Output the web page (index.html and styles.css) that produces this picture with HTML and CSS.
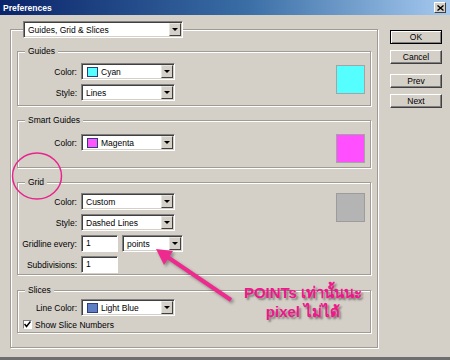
FILE: index.html
```html
<!DOCTYPE html>
<html lang="th">
<head>
    <meta charset="UTF-8">
    <meta name="viewport" content="width=device-width, initial-scale=1.0">
    <title>Preferences</title>

    <!-- Styles -->
    <link rel="stylesheet" href="styles.css">
</head>
<body>
    <!-- Title bar -->
    <div class="titlebar">
        <span class="title">Preferences</span>
        <span class="close-btn">
            <svg width="7" height="6" viewBox="0 0 7 6"><path d="M0.5 0.5 L6.5 5.5 M6.5 0.5 L0.5 5.5" stroke="#000" stroke-width="1.4"/></svg>
        </span>
    </div>

    <!-- Dialog content -->
    <div class="content">
        <div class="outer">
            <div class="select page-select">
                <span class="val">Guides, Grid &amp; Slices</span>
                <span class="arrow"></span>
            </div>

            <!-- Guides -->
            <div class="group guides">
                <span class="legend">Guides</span>
                <div class="fields">
                    <div class="row">
                        <span class="lbl">Color:</span>
                        <div class="select">
                            <span class="chip chip-cyan"></span>
                            <span class="val">Cyan</span>
                            <span class="arrow"></span>
                        </div>
                    </div>
                    <div class="row">
                        <span class="lbl">Style:</span>
                        <div class="select">
                            <span class="val">Lines</span>
                            <span class="arrow"></span>
                        </div>
                    </div>
                </div>
                <div class="swatch swatch-cyan"></div>
            </div>

            <!-- Smart Guides -->
            <div class="group smart">
                <span class="legend">Smart Guides</span>
                <div class="fields">
                    <div class="row">
                        <span class="lbl">Color:</span>
                        <div class="select">
                            <span class="chip chip-magenta"></span>
                            <span class="val">Magenta</span>
                            <span class="arrow"></span>
                        </div>
                    </div>
                </div>
                <div class="swatch swatch-magenta"></div>
            </div>

            <!-- Grid -->
            <div class="group grid">
                <span class="legend">Grid</span>
                <div class="fields">
                    <div class="row">
                        <span class="lbl">Color:</span>
                        <div class="select">
                            <span class="val">Custom</span>
                            <span class="arrow"></span>
                        </div>
                    </div>
                    <div class="row">
                        <span class="lbl">Style:</span>
                        <div class="select">
                            <span class="val">Dashed Lines</span>
                            <span class="arrow"></span>
                        </div>
                    </div>
                    <div class="row">
                        <span class="lbl">Gridline every:</span>
                        <div class="input">1</div>
                        <div class="select unit-select">
                            <span class="val">points</span>
                            <span class="arrow"></span>
                        </div>
                    </div>
                    <div class="row">
                        <span class="lbl">Subdivisions:</span>
                        <div class="input">1</div>
                    </div>
                </div>
                <div class="swatch swatch-gray"></div>
            </div>

            <!-- Slices -->
            <div class="group slices">
                <span class="legend">Slices</span>
                <div class="fields">
                    <div class="row">
                        <span class="lbl">Line Color:</span>
                        <div class="select">
                            <span class="chip chip-blue"></span>
                            <span class="val">Light Blue</span>
                            <span class="arrow"></span>
                        </div>
                    </div>
                    <div class="check-row">
                        <span class="checkbox">
                            <svg width="7" height="7" viewBox="0 0 7 7"><path d="M0.5 3 L2.5 5.5 L6.5 0.5" fill="none" stroke="#000" stroke-width="1.5"/></svg>
                        </span>
                        <span>Show Slice Numbers</span>
                    </div>
                </div>
            </div>
        </div>

        <!-- Buttons -->
        <div class="buttons">
            <div class="btn btn-default">OK</div>
            <div class="btn btn-cancel">Cancel</div>
            <div class="btn btn-prev">Prev</div>
            <div class="btn btn-next">Next</div>
        </div>
    </div>

    <div class="taskbar"></div>

    <!-- Annotation -->
    <svg class="marks" width="450" height="360" viewBox="0 0 450 360">
        <ellipse cx="37" cy="176" rx="24.5" ry="23" fill="none" stroke="#e8258c" stroke-width="1.5"/>
        <g class="arrow-mark">
            <line x1="231" y1="300" x2="166" y2="256" stroke="#ee2a8f" stroke-width="4"/>
            <polygon points="156,249 173,251 164,265" fill="#ee2a8f"/>
        </g>
    </svg>
    <div class="note">POINTs เท่านั้นนะ<br>pixel ไม่ได้</div>
</body>
</html>
```

FILE: styles.css
```css
/* Base Reset */
* {
    margin: 0;
    padding: 0;
    box-sizing: border-box;
}

body {
    position: relative;
    width: 450px;
    height: 360px;
    overflow: hidden;
    background-color: #d4d0c8;
    font-family: "Liberation Sans", Arial, sans-serif;
    font-size: 8.5px;
    color: #000;
}

/* Title Bar */
.titlebar {
    height: 15px;
    display: flex;
    align-items: center;
    justify-content: space-between;
    padding: 0 4px 0 3px;
    background: linear-gradient(to right, #0a246a, #3a6ea5 55%, #a6caf0);
}

.title {
    color: #fff;
    font-weight: bold;
}

.close-btn {
    width: 12px;
    height: 11px;
    display: flex;
    align-items: center;
    justify-content: center;
    background-color: #d4d0c8;
    border: 1px solid;
    border-color: #fff #404040 #404040 #fff;
}

/* Content */
.content {
    display: flex;
    height: 342px;
    padding: 14px 0 0 10px;
}

.outer {
    width: 368px;
    height: 319px;
    border: 1px solid #a09c94;
    box-shadow: 1px 1px 0 #fff, inset 1px 1px 0 #fff;
}

.taskbar {
    height: 3px;
    background-color: #6e6e6e;
}

/* Group Boxes */
.group {
    position: relative;
    display: flex;
    justify-content: space-between;
    width: 354px;
    margin-left: 6px;
    border: 1px solid #a09c94;
    box-shadow: 1px 1px 0 #fff, inset 1px 1px 0 #fff;
}

.legend {
    position: absolute;
    top: -6px;
    left: 7px;
    padding: 0 3px;
    line-height: 11px;
    background-color: #d4d0c8;
}

.guides {
    margin-top: 13px;
    padding: 11px 5px 4px 0;
}

.smart {
    margin-top: 14px;
    padding: 13px 5px 4px 0;
}

.grid {
    margin-top: 14px;
    padding: 10px 5px 1px 0;
}

.slices {
    margin-top: 15px;
    padding: 8px 5px 2px 0;
}

.fields {
    display: flex;
    flex-direction: column;
    gap: 4px;
}

.slices .fields {
    gap: 3px;
}

.row {
    display: flex;
    align-items: center;
    gap: 4px;
    height: 17px;
}

.lbl {
    width: 59px;
    text-align: right;
    white-space: nowrap;
}

/* Dropdowns */
.select {
    display: flex;
    align-items: center;
    width: 94px;
    height: 17px;
    background-color: #fff;
    border: 1px solid;
    border-color: #808080 #fff #fff #808080;
    box-shadow: inset 1px 1px 0 #404040, inset -1px -1px 0 #d4d0c8;
}

.page-select {
    width: 160px;
    margin: -9px 0 0 12px;
}

.unit-select {
    width: 61px;
}

.val {
    flex: 1;
    padding-left: 4px;
    white-space: nowrap;
}

.chip + .val {
    padding-left: 3px;
}

.chip {
    width: 11px;
    height: 10px;
    margin-left: 5px;
    border: 1px solid #2b3f7a;
}

.chip-cyan {
    background-color: #55ffff;
}

.chip-magenta {
    background-color: #ff55ff;
}

.chip-blue {
    background-color: #5f7fc4;
}

.arrow {
    position: relative;
    width: 12px;
    height: 13px;
    margin-right: 1px;
    background-color: #d4d0c8;
    border: 1px solid;
    border-color: #e8e6e0 #404040 #404040 #e8e6e0;
}

.arrow::after {
    content: "";
    position: absolute;
    top: 4px;
    left: 2px;
    border-left: 3px solid transparent;
    border-right: 3px solid transparent;
    border-top: 3px solid #000;
}

/* Text Inputs */
.input {
    width: 37px;
    height: 17px;
    padding-left: 4px;
    line-height: 15px;
    background-color: #fff;
    border: 1px solid;
    border-color: #808080 #fff #fff #808080;
    box-shadow: inset 1px 1px 0 #404040;
}

/* Colour Swatches */
.swatch {
    width: 29px;
    height: 29px;
    margin-top: 2px;
    border: 1px solid #a4a4a4;
}

.smart .swatch,
.grid .swatch {
    margin-top: 0;
}

.swatch-cyan {
    background-color: #55ffff;
}

.swatch-magenta {
    background-color: #ff4fff;
}

.swatch-gray {
    background-color: #b4b4b4;
    border-color: #9c9c9c;
}

/* Checkbox */
.check-row {
    display: flex;
    align-items: center;
    gap: 3px;
    height: 11px;
    padding-left: 5px;
}

.checkbox {
    width: 9px;
    height: 9px;
    display: flex;
    align-items: center;
    justify-content: center;
    background-color: #fff;
    border: 1px solid;
    border-color: #808080 #fff #fff #808080;
}

/* Buttons */
.buttons {
    display: flex;
    flex-direction: column;
    width: 52px;
    margin: 1px 0 0 12px;
}

.btn {
    height: 14px;
    display: flex;
    align-items: center;
    justify-content: center;
    background-color: #d4d0c8;
    border: 1px solid;
    border-color: #fff #404040 #404040 #fff;
    box-shadow: inset -1px -1px 0 #808080;
}

.btn-default {
    border-color: #000;
    box-shadow: inset 1px 1px 0 #fff, inset -1px -1px 0 #808080;
}

.btn-cancel,
.btn-next {
    margin-top: 6px;
}

.btn-prev {
    margin-top: 10px;
}

/* Annotation */
.marks {
    position: absolute;
    top: 0;
    left: 0;
    pointer-events: none;
}

.arrow-mark {
    filter: drop-shadow(2px 2px 1.5px rgba(0, 0, 0, 0.35));
}

.note {
    position: absolute;
    top: 283px;
    left: 236px;
    width: 134px;
    text-align: center;
    font-size: 15px;
    font-weight: bold;
    line-height: 19px;
    color: #f0168c;
    text-shadow: 2px 2px 2px rgba(0, 0, 0, 0.4);
}
```
